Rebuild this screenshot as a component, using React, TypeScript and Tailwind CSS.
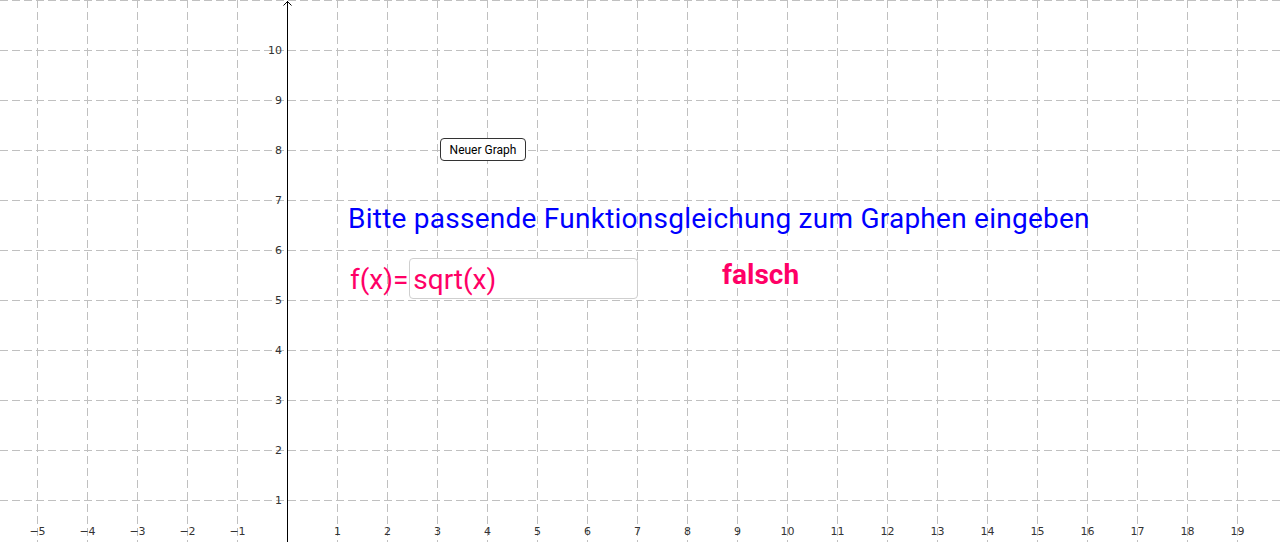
import React from 'react'

const W = 1280
const H = 542
const OX = 287
const OY = 550
const S = 50

export default function App() {
  const xs: number[] = []
  for (let i = -5; i <= 19; i++) xs.push(i)
  const ys: number[] = []
  for (let j = 1; j <= 11; j++) ys.push(j)

  return (
    <div
      className="relative w-[1280px] h-[542px] overflow-hidden bg-white"
      style={{ fontFamily: 'Roboto, "Noto Sans", sans-serif' }}
    >
      {/* GRID + AXIS */}
      <svg width={W} height={H} className="absolute inset-0">
        {xs.map((i) =>
          i === 0 ? null : (
            <line
              key={'v' + i}
              x1={OX + i * S + 0.5}
              x2={OX + i * S + 0.5}
              y1={0}
              y2={H}
              stroke="#c0c0c0"
              strokeWidth={1}
              strokeDasharray="8 4"
            />
          ),
        )}
        {ys.map((j) => (
          <line
            key={'h' + j}
            x1={0}
            x2={W}
            y1={OY - j * S + 0.5}
            y2={OY - j * S + 0.5}
            stroke="#c0c0c0"
            strokeWidth={1}
            strokeDasharray="8 4"
          />
        ))}
        <line x1={OX + 0.5} x2={OX + 0.5} y1={1} y2={H} stroke="#000" strokeWidth={1} />
        <path d="M283.5 5.5 L287.5 1.5 L291.5 5.5" fill="none" stroke="#000" strokeWidth={1} />
        {xs.map((i) =>
          i === 0 ? null : (
            <text
              key={'tx' + i}
              x={OX + i * S + 0.5}
              y={535}
              textAnchor="middle"
              fontSize={11}
              fill="#333"
              fontFamily='"DejaVu Sans", sans-serif'
            >
              {i < 0 ? '\u2212' + -i : i}
            </text>
          ),
        )}
        {ys.map((j) =>
          j > 10 ? null : (
            <text
              key={'ty' + j}
              x={282}
              y={OY - j * S + 4}
              textAnchor="end"
              fontSize={11}
              fill="#333"
              fontFamily='"DejaVu Sans", sans-serif'
            >
              {j}
            </text>
          ),
        )}
      </svg>

      {/* BUTTON */}
      <button className="absolute left-[440px] top-[138px] w-[86px] h-[23px] rounded-[4px] border border-[#333] bg-white text-[12px] text-black leading-none">
        Neuer Graph
      </button>

      {/* PROMPT */}
      <div className="absolute left-[348px] top-[201px] text-[28px] leading-[36px] tracking-[0.25px] text-[#0000ff] whitespace-nowrap">
        Bitte passende Funktionsgleichung zum Graphen eingeben
      </div>

      {/* INPUT */}
      <div className="absolute left-[350px] top-[258px] flex items-start">
        <span className="text-[28px] leading-[40px] text-[#ff0066] relative top-[2px]">f(x)=</span>
        <div className="ml-[1px] w-[229px] h-[41px] rounded-[4px] border border-[#cfcfcf] bg-white pl-[3px]">
          <span className="block text-[28px] leading-[40px] text-[#ff0066] relative top-[1px]">sqrt(x)</span>
        </div>
      </div>

      {/* RESULT */}
      <div className="absolute left-[722px] top-[257px] text-[28px] leading-[36px] font-bold text-[#ff0066]">
        falsch
      </div>
    </div>
  )
}
